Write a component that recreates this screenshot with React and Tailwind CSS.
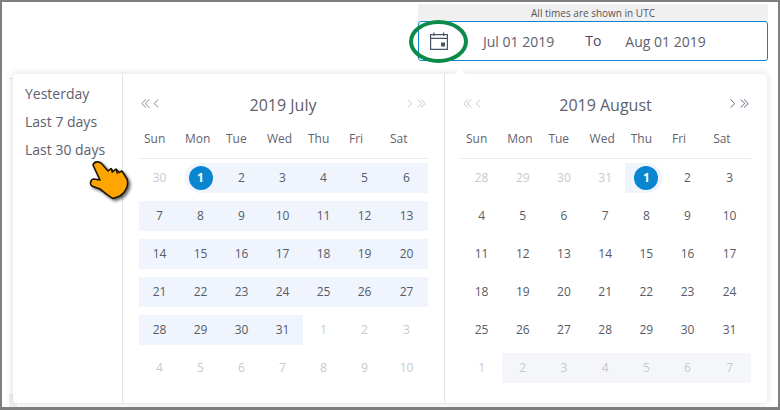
import React from "react";

const julyRows = [
  [[30, "muted"], [1, "start"], [2, "range"], [3, "range"], [4, "range"], [5, "range"], [6, "range"]],
  [[7, "range"], [8, "range"], [9, "range"], [10, "range"], [11, "range"], [12, "range"], [13, "range"]],
  [[14, "range"], [15, "range"], [16, "range"], [17, "range"], [18, "range"], [19, "range"], [20, "range"]],
  [[21, "range"], [22, "range"], [23, "range"], [24, "range"], [25, "range"], [26, "range"], [27, "range"]],
  [[28, "range"], [29, "range"], [30, "range"], [31, "range"], [1, "muted"], [2, "muted"], [3, "muted"]],
  [[4, "muted"], [5, "muted"], [6, "muted"], [7, "muted"], [8, "muted"], [9, "muted"], [10, "muted"]],
];

const augustRows = [
  [[28, "muted"], [29, "muted"], [30, "muted"], [31, "muted"], [1, "end"], [2, "day"], [3, "day"]],
  [[4, "day"], [5, "day"], [6, "day"], [7, "day"], [8, "day"], [9, "day"], [10, "day"]],
  [[11, "day"], [12, "day"], [13, "day"], [14, "day"], [15, "day"], [16, "day"], [17, "day"]],
  [[18, "day"], [19, "day"], [20, "day"], [21, "day"], [22, "day"], [23, "day"], [24, "day"]],
  [[25, "day"], [26, "day"], [27, "day"], [28, "day"], [29, "day"], [30, "day"], [31, "day"]],
  [[1, "muted"], [2, "hover"], [3, "hover"], [4, "hover"], [5, "hover"], [6, "hover"], [7, "hover"]],
];

const weekdays = ["Sun", "Mon", "Tue", "Wed", "Thu", "Fri", "Sat"];

function Single({ flip, color }) {
  return (
    <svg width="6" height="9" viewBox="0 0 6 9" fill="none" stroke={color}>
      <path d={flip ? "M.6 .4l4.2 4.1-4.2 4.1" : "M5.4 .4L1.2 4.5l4.2 4.1"} />
    </svg>
  );
}

function Double({ flip, color }) {
  return (
    <svg width="9" height="9" viewBox="0 0 9 9" fill="none" stroke={color}>
      <path d={flip ? "M.6 .4l4.2 4.1-4.2 4.1M4 .4l4.2 4.1L4 8.6" : "M8.4 .4L4.2 4.5l4.2 4.1M5 .4L.8 4.5 5 8.6"} />
    </svg>
  );
}

function Cell({ day, kind }) {
  if (kind === "start") {
    return (
      <div className="relative flex h-[30px] items-center justify-center">
        <div className="absolute inset-y-0 left-[5px] right-0 rounded-l-[15px] bg-[#f0f4fc]" />
        <span className="relative flex h-6 w-6 items-center justify-center rounded-full bg-[#0a85d1] text-[12px] font-bold text-white">
          {day}
        </span>
      </div>
    );
  }
  if (kind === "end") {
    return (
      <div className="relative flex h-[30px] items-center justify-center">
        <div className="absolute inset-y-0 left-[-1px] right-[5px] rounded-r-[15px] bg-[#f0f4fc]" />
        <span className="relative flex h-6 w-6 items-center justify-center rounded-full bg-[#0a85d1] text-[12px] font-bold text-white">
          {day}
        </span>
      </div>
    );
  }
  const styles = {
    muted: "text-[#c6c9d1]",
    day: "text-[#565b67]",
    range: "bg-[#f0f4fc] text-[#565b67]",
    hover: "bg-[#f4f6fa] text-[#c6c9d1]",
  };
  return (
    <div className={`flex h-[30px] items-center justify-center text-[12px] ${styles[kind]}`}>
      {day}
    </div>
  );
}

function Month({ title, rows, leftColor, rightColor, border, cols }) {
  return (
    <div className={`w-[322px] px-4 ${border ? "border-r border-[#e4e4e4]" : ""}`}>
      <div className="flex h-[52px] items-center justify-between px-[2px] pt-[9px]">
        <div className="mb-[2px] flex gap-[3px]">
          <Double color={leftColor} />
          <Single color={leftColor} />
        </div>
        <span className="text-[16px] text-[#5d616c]">{title}</span>
        <div className="mb-[2px] flex gap-1">
          <Single flip color={rightColor} />
          <Double flip color={rightColor} />
        </div>
      </div>
      <div className={`grid h-[33px] items-start border-b border-[#e8e9ee] pt-1 text-[12px] text-[#5f6470] ${cols}`}>
        {weekdays.map((w) => (
          <span key={w} className="pl-[5px]">
            {w}
          </span>
        ))}
      </div>
      <div className="mt-1 flex flex-col gap-2">
        {rows.map((row, i) => (
          <div key={i} className={`grid ${cols}`}>
            {row.map(([day, kind], j) => (
              <Cell key={j} day={day} kind={kind} />
            ))}
          </div>
        ))}
      </div>
    </div>
  );
}

export default function App() {
  return (
    <div className="relative h-[410px] w-[780px] overflow-hidden border-t-2 border-r-2 border-b-[3px] border-l-2 border-[#7f7f7f] bg-white font-['Open_Sans',sans-serif]">
      {/* edge of the page card behind the popup */}
      <div className="absolute top-[76px] left-[7px] h-[3px] w-[8px] border-t border-[#e6e6e6]" />
      <div className="absolute top-[392px] left-[7px] h-[13px] w-[8px] bg-[#f0f0f0]" />

      <div className="mt-[2px] ml-[416px] w-[350px]">
        <div className="h-[17px] bg-[#f0f0f0] pt-[1px] text-center text-[10px] leading-[17px] text-[#555555]">
          All times are shown in UTC
        </div>
        <div className="flex h-[40px] items-center rounded-[3px] border border-[#0a84d0] pl-[11px] text-[14px] text-[#5d616c]">
          <svg width="18" height="18" viewBox="0 0 18 18" fill="none" stroke="#4a5468" strokeWidth="1.2">
            <path d="M.6 2.6h16.8v14.8H.6zM.6 6.4h16.8M4 .4v3.6M13.6 .4v3.6" />
            <rect x="11" y="10.5" width="4" height="4" fill="#4a5468" stroke="none" />
          </svg>
          <span className="ml-[35px]">Jul 01 2019</span>
          <span className="ml-[31px] mb-[2px] text-[#4c4460]">To</span>
          <span className="ml-[24px]">Aug 01 2019</span>
        </div>
      </div>

      <div className="relative mt-[13px] ml-[11px] flex h-[329px] w-[754px] rounded-[4px] bg-white shadow-[0_0_8px_rgba(0,0,0,0.14)]">
        <div className="absolute top-[-4px] left-[443px] h-2 w-2 rotate-45 bg-white" />
        <div className="flex w-[110px] flex-col gap-[6px] border-r border-[#e4e4e4] pt-[9px] pl-3 text-[14px] leading-[22px] text-[#5d616c]">
          <span>Yesterday</span>
          <span>Last 7 days</span>
          <span>Last 30 days</span>
        </div>
        <Month title="2019 July" rows={julyRows} leftColor="#8a8d96" rightColor="#c4c6cc" border cols="grid-cols-[repeat(6,41px)_1fr]" />
        <Month title="2019 August" rows={augustRows} leftColor="#c4c6cc" rightColor="#5f6d8c" cols="grid-cols-[repeat(6,41.2px)_1fr]" />
      </div>

      {/* green highlight round the calendar icon */}
      <div className="absolute top-[18px] left-[407px] h-[43px] w-[59px] rounded-[50%] border-[4px] border-[#0b8a4a]" />

      {/* pointer */}
      <svg className="absolute top-[148px] left-[78px] drop-shadow-[2px_2px_1.5px_rgba(0,0,0,0.6)]" width="60" height="60" viewBox="0 0 60 60" strokeLinejoin="round">
        <path
          d="M13 15C14 11 20 11 22 14L28 21L31 18.5L33 21.5L36 19L39 22.5L42 21L47 29C49 35 46 42 40 46L33 48.5C28 46 24 42 20 39L12 36C9 34 11 29 14 29L20 30Z"
          fill="#ffa500"
          stroke="#1c1404"
          strokeWidth="1.6"
        />
        <path d="M31 19l1.5 4M36 20l1.5 4" fill="none" stroke="#1c1404" strokeWidth="1.1" />
      </svg>
    </div>
  );
}
